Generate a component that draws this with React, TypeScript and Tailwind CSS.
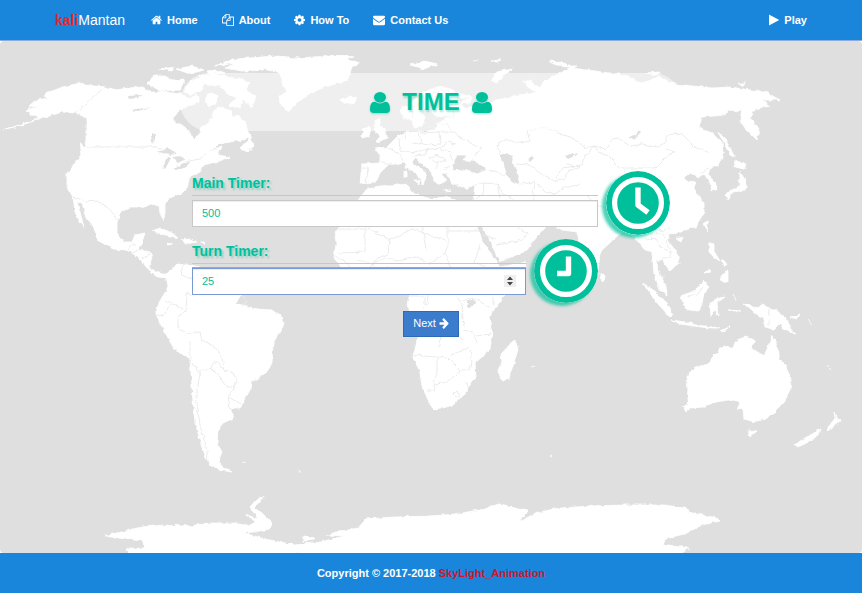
import React, { useState } from "react";

const icons = {
  home: {
    box: "64 0 1664 1792",
    d: "M1472 992v480q0 26-19 45t-45 19h-384v-384h-256v384h-384q-26 0-45-19t-19-45v-480q0-1 .5-3t.5-3l575-474 575 474q1 2 1 6zm223-69l-62 74q-8 9-21 11h-3q-13 0-21-7l-692-577-692 577q-12 8-24 7-13-2-21-11l-62-74q-8-10-7-23.5t11-21.5l719-599q32-26 76-26t76 26l244 204v-195q0-14 9-23t23-9h192q14 0 23 9t9 23v408l219 182q10 8 11 21.5t-7 23.5z",
  },
  files: {
    box: "0 0 1792 1792",
    d: "M1696 384q40 0 68 28t28 68v1216q0 40-28 68t-68 28h-960q-40 0-68-28t-28-68v-288h-544q-40 0-68-28t-28-68v-672q0-40 20-88t48-76l408-408q28-28 76-48t88-20h416q40 0 68 28t28 68v328q68-40 128-40h416zm-544 213l-299 299h299v-299zm-640-384l-299 299h299v-299zm196 647l316-316v-416h-384v416q0 40-28 68t-68 28h-416v640h512v-256q0-40 20-88t48-76zm956 804v-1152h-384v416q0 40-28 68t-68 28h-416v640h896z",
  },
  cog: {
    box: "128 0 1536 1792",
    d: "M1152 896q0-106-75-181t-181-75-181 75-75 181 75 181 181 75 181-75 75-181zm512-109v222q0 12-8 23t-20 13l-185 28q-19 54-39 91 35 50 107 138 10 12 10 25t-9 23q-27 37-99 108t-94 71q-12 0-26-9l-138-108q-44 23-91 38-16 136-29 186-7 28-36 28h-222q-14 0-24.5-8.5t-11.5-21.5l-28-184q-49-16-90-37l-141 107q-10 9-25 9-14 0-25-11-126-114-165-168-7-10-7-23 0-12 8-23 15-21 51-66.5t54-70.5q-27-50-41-99l-183-27q-13-2-21-12.5t-8-23.5v-222q0-12 8-23t19-13l186-28q14-46 39-92-40-57-107-138-10-12-10-24 0-10 9-23 26-36 98.5-107.5t94.5-71.5q13 0 26 10l138 107q44-23 91-38 16-136 29-186 7-28 36-28h222q14 0 24.5 8.5t11.5 21.5l28 184q49 16 90 37l142-107q9-9 24-9 13 0 25 10 129 119 165 170 7 8 7 22 0 12-8 23-15 21-51 66.5t-54 70.5q26 50 41 98l183 28q13 2 21 12.5t8 23.5z",
  },
  envelope: {
    box: "0 0 1792 1792",
    d: "M1792 710v794q0 66-47 113t-113 47h-1472q-66 0-113-47t-47-113v-794q44 49 101 87 362 246 497 345 57 42 92.5 65.5t94.5 48 110 24.5h2q51 0 110-24.5t94.5-48 92.5-65.5q170-123 498-345 57-39 100-87zm0-294q0 79-49 151t-122 123q-376 261-468 325-10 7-42.5 31t-54 38.5-52 32.5-57.5 27-50 9h-2q-23 0-50-9t-57.5-27-52-32.5-54-38.5-42.5-31q-91-64-262-182.5t-205-142.5q-62-42-117-115.5t-55-136.5q0-78 41.5-130t118.5-52h1472q65 0 112.5 47t47.5 113z",
  },
  play: {
    box: "192 0 1408 1792",
    d: "M1576 927l-1328 738q-23 13-39.5 3t-16.5-36v-1472q0-26 16.5-36t39.5 3l1328 738q23 13 23 31t-23 31z",
  },
  user: {
    box: "256 128 1280 1536",
    d: "M1536 1399q0 109-62.5 187t-150.5 78h-854q-88 0-150.5-78t-62.5-187q0-85 8.5-160.5t31.5-152 58.5-131 94-89 134.5-34.5q131 128 313 128t313-128q76 0 134.5 34.5t94 89 58.5 131 31.5 152 8.5 160.5zm-256-887q0 159-112.5 271.5t-271.5 112.5-271.5-112.5-112.5-271.5 112.5-271.5 271.5-112.5 271.5 112.5 112.5 271.5z",
  },
  arrow: {
    box: "64 128 1600 1664",
    d: "M1600 960q0 54-37 91l-651 651q-39 37-91 37-51 0-90-37l-75-75q-38-38-38-91t38-91l293-293h-704q-52 0-84.5-37.5t-32.5-90.5v-128q0-53 32.5-90.5t84.5-37.5h704l-293-294q-38-36-38-90t38-90l75-75q38-38 90-38 53 0 91 38l651 651q37 35 37 90z",
  },
};

function Icon({ name, className }: { name: keyof typeof icons; className: string }) {
  return (
    <svg viewBox={icons[name].box} preserveAspectRatio="none" className={`shrink-0 fill-current ${className}`} aria-hidden="true">
      <path d={icons[name].d} />
    </svg>
  );
}

const land = [
  // North and Central America
  "M3 130L22 124 40 118 34 116 26 111 32 108 40 108 30 106 37 100 48 98 43 96 52 91 66 86 80 83 94 86 105 87 117 90 127 88 143 87 150 92 165 92 180 94 190 98 197 95 200 102 187 107 180 110 174 117 175 122 187 128 192 137 195 140 200 135 200 129 208 124 212 118 212 112 218 108 230 110 232 117 238 115 245 122 248 132 252 137 242 140 230 142 220 144 208 152 222 147 218 155 230 157 217 162 203 165 200 172 190 177 187 187 183 192 170 198 165 203 165 213 163 221 160 213 159 206 152 204 142 207 130 207 120 212 117 223 117 233 123 242 132 242 135 235 145 233 142 242 138 250 150 252 152 257 149 267 155 272 160 272 167 275 166 278 158 277 147 268 140 259 132 253 125 250 113 249 97 240 95 230 87 218 82 203 77 202 80 212 84 227 80 222 75 212 73 197 67 187 67 173 75 163 82 155 80 142 85 149 87 140 87 118 75 113 62 112 40 119 22 125Z",
  // Arctic islands
  "M147 83L155 76 165 76 172 80 185 79 180 90 160 91 150 85Z",
  "M184 92L190 82 200 78 204 84 200 92 190 94Z",
  "M199 76L212 74 228 77 240 79 250 83 246 89 256 97 252 107 243 99 239 109 230 105 237 98 226 93 220 85 205 84Z",
  "M205 97L212 92 218 96 216 104 208 106Z M176 69L192 66 204 70 190 74Z M214 66L235 59 250 58 275 56 290 57 272 61 263 70 242 71 225 68 238 63Z M160 69L175 67 172 71Z M232 64L260 60 250 67Z M206 71L216 70 226 73 210 74Z",
  // Newfoundland
  "M240 148L250 138 254 146 247 152Z",
  // Greenland and Iceland
  "M262 62L275 57 300 58 340 55 353 57 345 60 360 62 352 68 350 73 347 80 335 84 323 88 310 93 297 103 290 112 286 110 280 104 279 96 287 92 282 82 278 72 268 70Z",
  "M340 100L348 96 357 98 355 102 346 104Z",
  // Caribbean
  "M152 231L160 228 172 233 178 238 166 235Z M181 240L190 239 197 242 186 244Z M200 242L205 242 204 245Z M168 243L173 244 168 245Z",
  // South America
  "M166 275L177 263 185 264 205 268 222 275 232 285 242 295 235 303 243 305 257 309 272 310 283 318 283 327 273 343 272 363 267 372 251 382 250 390 240 408 230 408 234 418 223 423 218 430 217 443 222 452 218 462 224 468 232 472 220 470 211 466 203 453 200 440 195 423 193 400 190 360 173 347 164 331 157 317 157 307 160 301 166 291 168 286Z",
  // Europe and Asia
  "M400 110L412 102 423 93 437 87 448 88 457 93 472 97 470 103 460 104 465 108 478 106 488 103 497 100 513 96 525 94 537 93 528 87 522 80 530 81 540 88 543 82 560 73 572 68 602 72 625 75 642 83 659 77 675 84 712 88 729 87 765 92 780 100 762 100 770 106 752 111 750 118 759 128 757 140 745 128 740 120 742 109 737 112 729 109 725 115 702 117 699 128 712 133 722 143 723 153 719 165 710 168 708 175 716 183 717 190 712 191 709 180 704 174 699 177 690 173 684 177 687 181 697 182 694 190 704 203 704 213 695 227 677 233 669 234 667 240 677 252 679 263 670 271 662 260 656 260 659 271 666 286 667 295 660 290 654 274 652 252 644 249 635 238 622 232 615 238 600 252 598 273 592 274 584 260 577 232 562 230 550 224 542 230 527 250 500 262 497 257 490 240 483 228 477 218 473 200 475 185 462 187 452 183 447 174 450 171 463 170 477 174 487 170 480 163 472 160 463 161 467 155 457 155 452 165 453 170 442 174 446 181 438 185 432 175 427 168 415 158 412 162 427 174 422 184 421 179 407 167 405 162 388 165 380 173 377 180 367 185 360 183 362 164 380 163 380 155 375 149 387 147 397 137 403 133 412 132 422 132 435 130 438 123 448 118 450 115 438 117 432 112 437 103 430 103 422 112 425 118 422 126 415 128 411 119 403 119Z",
  // British Isles
  "M375 120L380 118 380 125 385 130 388 138 377 142 379 136 374 129Z M363 129L369 127 370 136 362 138Z",
  // Arctic islands of Eurasia
  "M492 80L497 72 512 69 502 76 496 83Z M410 65L425 61 437 64 424 69Z M550 61L565 63 568 66 556 65Z M562 66L577 66 572 69Z M645 73L660 72 658 75Z M738 83L746 83 743 86Z M473 61L479 60 M491 61L501 60 497 62Z",
  // Mediterranean islands
  "M404 171L407 170 407 177 404 177Z M405 166L407 166 406 169Z M414 180L420 180 419 184Z M443 190L452 190 447 192Z M464 188L470 186 468 190Z",
  // Africa
  "M358 200L367 189 380 187 407 184 412 193 430 199 443 197 460 201 473 201 477 227 482 240 490 253 500 267 527 262 520 278 503 297 489 317 492 333 490 350 475 363 476 377 468 385 467 392 453 405 443 408 433 409 429 402 422 387 420 372 413 357 418 338 416 325 407 305 410 294 403 288 390 287 370 292 352 284 342 268 334 258 336 244 335 233 340 226Z",
  // Madagascar
  "M515 339L518 350 509 378 503 381 499 376 498 370 502 362 501 354Z",
  // Sri Lanka, Hainan and Taiwan
  "M601 272L605 277 603 282 600 279Z M676 239L683 237 681 242Z M704 223L708 221 707 231Z",
  // Japan and Sakhalin
  "M718 132L727 141 735 158 730 155Z M735 160L746 165 744 169 734 167Z M740 172L746 181 746 190 733 192 728 200 724 195 739 186Z",
  // Philippines
  "M709 243L714 243 714 251 720 261 715 258 709 252Z M721 260L726 263 724 267Z M722 275L728 271 728 282 720 280Z M711 272L704 273 710 268Z",
  // Indonesia and Papua
  "M643 283L653 290 667 304 672 314 671 318 658 304Z M672 320L685 322 696 325 706 326 720 328 708 328 680 324Z M681 296L695 290 704 281 709 287 704 293 702 305 699 311 689 310 684 306Z M710 303L716 299 725 297 717 303 718 316 714 310 711 317Z M721 331L729 327 723 332Z M743 303L750 304 753 308 762 305 776 310 786 318 790 326 795 334 784 329 779 324 774 329 765 327 763 318 753 312Z M790 318L800 314 797 320Z M733 294L736 300 M728 310L741 311Z M807 319L812 325 M827 365L832 370Z",
  // Australia and New Zealand
  "M683 407L687 405 688 388 687 376 691 370 710 362 714 355 724 346 732 348 737 340 745 337 755 340 751 348 764 356 768 347 772 335 778 348 780 360 785 365 791 379 790 390 783 403 768 418 755 422 744 419 743 408 737 409 740 403 734 401 727 400 712 403 704 407 691 408 687 411Z",
  "M748 430L757 431 750 437Z M794 445L805 438 821 429 819 435 803 445 797 447Z M826 430L833 421 835 418 834 411 837 420 841 420 833 427Z",
  // Antarctica
  "M104 536L125 531 142 527 165 525 190 526 210 523 240 523 250 526 255 521 245 514 258 519 250 507 256 500 264 496 254 508 262 513 272 523 270 529 255 532 243 533 265 539 295 545 320 542 345 536 327 535 340 531 358 528 366 519 395 517 430 516 455 514 480 510 500 504 528 510 519 521 540 512 560 508 590 506 625 505 665 505 683 508 697 514 713 517 721 520 700 526 685 534 665 539 663 545 690 548 680 554 130 554 125 549 145 548 142 541 118 538Z",
  "M303 537L312 537 315 540 303 541Z M126 548L170 549 140 552Z",
  // Small southern islands
  "M242 462L246 463 M550 455L553 456 M298 470L301 472 M532 367L534 366",
].join(" ");

const water = [
  "M128 96L143 95 138 98 129 99Z",
  "M130 110L151 107 138 111Z",
  "M153 132L156 136 153 143 151 137Z",
  "M158 152L168 147 176 154 170 155Z",
  "M162 168L167 157 171 158 165 169Z",
  "M172 157L183 156 184 160 177 162Z",
  "M173 168L184 164 191 161 186 167 176 170Z",
  "M500 155L505 153 513 156 512 163 517 171 520 182 513 184 507 175Z",
  "M528 158L532 155 533 158 530 161Z",
  "M565 156L571 154 578 154 568 159Z",
  "M629 138L636 134 639 130 637 127 640 133 634 139Z",
  "M467 302L473 299 475 303 471 308 467 306Z",
  "M461 312L464 325 465 329 462 321Z",
  "M474 332L477 346 475 340Z",
  "M457 96L462 99 470 98 459 102Z",
].join(" ");

const borders = [
  "M105 87L76 113 M87 147L154 147 168 151 M184 162L200 159 208 152",
  "M73 197L87 202 98 201 109 208 117 219 M128 250L132 244 137 244 M133 253L138 250 M141 258L150 254 M184 264L181 272 185 276 192 280",
  "M157 315L163 316 171 305 165 301 M168 301L176 305 186 311 187 293 192 295 M187 309L178 318 178 327 187 334 200 332 202 340 215 347 223 361 224 370 216 361 211 368 199 371 196 368 190 360 190 340",
  "M193 363L200 374 196 396 200 425 207 450 208 463 M211 368L221 378 226 387 234 387 238 379 232 372 224 370 M238 382L228 397 230 408 M228 397L241 404 M243 297L247 301 242 307",
  "M337 229L365 229 365 252 339 253 M365 226L390 240 388 254 378 258 370 267 M390 240L412 229 445 240 M423 200L423 232 426 250 M448 226L448 245 445 253 430 264 M448 231L480 231 M445 253L450 267 M480 245L475 262 485 267 M335 257L345 261 351 268 M358 260L372 264 385 258 399 261 415 257 426 262 M388 287L387 266 M374 266L373 285",
  "M410 296L425 296 425 305 430 302 M428 295L427 305 422 308 M455 295L462 304 463 320 M463 300L475 298 490 308 M493 305L493 296 M414 355L447 358 M440 347L441 330 458 332 462 340 M450 355L464 350 470 347 M437 358L437 372 434 384 435 391 427 391 M435 384L448 382 460 370 470 370 472 363 470 350 M476 336L491 334 M466 382L467 386 M453 394L457 391 460 395 456 397Z M448 358L460 370 M462 330L473 332",
  "M362 168L368 168 366 184 M380 162L399 165 M388 148L400 154 403 163 M399 139L400 150 410 153 M405 134L406 139 M419 132L421 144 411 143 M421 133L439 132 440 144 428 145 421 143 M410 153L420 151 430 149 440 148 448 142 456 144 M427 150L425 155 412 156 M440 150L450 152 452 161 M430 158L438 155 447 160 436 163 430 158 M438 163L436 170 M442 170L450 166 M440 132L455 132 460 138 472 144 481 148 476 155 M438 123L447 124 451 130 M444 117L454 117 453 108 449 100 447 89",
  "M412 118L413 108 422 101 430 93 445 91 M435 102L435 95",
  "M500 155L497 145 505 139 520 143 530 141 527 131 545 127 563 135 575 139 585 148 595 146 605 150 613 139 618 138 630 146 642 144 657 147 665 143 667 135 681 133 695 147 710 153",
  "M594 146L598 152 608 156 620 168 640 168 655 168 665 158 675 152 666 149 M594 146L583 160 582 165 562 168 555 180 M517 164L530 165 540 173 555 181 565 178 M520 184L535 182 545 191 555 194 565 187 580 185 M535 182L533 196 537 209 M567 164L580 167 568 171 565 178",
  "M487 170L499 172 505 176 M475 185L484 183 497 184 500 198 M484 183L483 194 476 199 M497 184L503 194 515 200 M483 235L495 239 M496 245L508 243 523 240 528 233 518 228",
  "M586 195L598 206 610 211 M652 240L650 230 657 224 662 232 670 228 M646 240L655 238 660 247 671 252 670 258 662 258 M656 233L663 235 672 253 M659 275L664 276 M709 168L700 174 M770 309L769 326 M688 296L698 294 703 287",
].join(" ");

function WorldMap() {
  return (
    <svg viewBox="0 41 862 512" preserveAspectRatio="none" className="absolute inset-0 size-full rounded-sm bg-[#dfdfdf]" aria-hidden="true">
      <filter id="coast" x="0" y="0" width="100%" height="100%" colorInterpolationFilters="sRGB">
        <feTurbulence type="fractalNoise" baseFrequency="0.18" numOctaves="2" seed="4" result="noise" />
        <feDisplacementMap in="SourceGraphic" in2="noise" scale="4" xChannelSelector="R" yChannelSelector="G" />
      </filter>
      <g filter="url(#coast)">
        <path d={land} fill="#fff" stroke="#fff" strokeWidth="0.8" />
        <path d={water} fill="#dfdfdf" />
      </g>
      <path d={borders} fill="none" stroke="#ebebeb" strokeWidth="1" strokeLinejoin="round" filter="url(#coast)" />
    </svg>
  );
}

function Clock({ hands }: { hands: string }) {
  return (
    <svg viewBox="0 0 64 64" className="size-16 shrink-0 rounded-full shadow-[-4px_3px_3px_#00c09bb3]" aria-hidden="true">
      <circle cx="32" cy="32" r="32" fill="#00c09b" />
      <circle cx="32" cy="32" r="23.4" fill="none" stroke="#fff" strokeWidth="5.2" />
      <path d={hands} fill="none" stroke="#fff" strokeWidth="5.4" strokeLinejoin="round" />
    </svg>
  );
}

const links: { label: string; icon: keyof typeof icons; size: string }[] = [
  { label: "Home", icon: "home", size: "h-3 w-[11px]" },
  { label: "About", icon: "files", size: "size-3" },
  { label: "How To", icon: "cog", size: "h-3 w-[11px]" },
  { label: "Contact Us", icon: "envelope", size: "size-3" },
];

const labelStyle =
  "h-[25px] border-b border-[#c8c8c8] text-sm leading-6 font-bold text-[#00c09b] [text-shadow:2px_2px_2px_#00c09b66]";
const fieldStyle =
  "h-[27px] w-full appearance-none border bg-white px-[9px] pb-0.5 text-[11px] text-[#00c09b] outline-none [&::-webkit-inner-spin-button]:appearance-none";

export default function App() {
  const [main, setMain] = useState("500");
  const [turn, setTurn] = useState("25");
  return (
    <div className="flex min-h-screen flex-col bg-white font-['Liberation_Sans',Arial,sans-serif] text-[11px]">
      <header className="border-b border-[#8cabdc] bg-[#1a86db] text-white">
        <nav className="mx-auto flex h-10 items-center gap-6 px-[55px] font-bold">
          <a href="#" className="mr-0.5 text-[14px] font-normal">
            <span className="font-bold text-[#e5272f]">kali</span>Mantan
          </a>
          {links.map((l) => (
            <a key={l.label} href="#" className="flex items-center gap-[5px] whitespace-nowrap">
              <Icon name={l.icon} className={l.size} />
              {l.label}
            </a>
          ))}
          <a href="#" className="ml-auto flex items-center gap-[5px]">
            <Icon name="play" className="h-3 w-2.5" />
            Play
          </a>
        </nav>
      </header>

      <main className="relative flex-1">
        <WorldMap />
        <div className="relative mx-auto flex max-w-[502px] flex-col pt-8">
          <h1 className="flex h-[58px] items-center justify-center gap-3 rounded-[30px] bg-white/50 text-2xl font-bold text-[#00c09b] [text-shadow:1px_2px_2px_#00c09b66]">
            <Icon name="user" className="h-[21px] w-5 drop-shadow-[0_1px_1px_#00c09b66]" />
            TIME
            <Icon name="user" className="h-[21px] w-5 drop-shadow-[0_1px_1px_#00c09b66]" />
          </h1>
          <form className="mx-3 mt-10 flex flex-col gap-1" onSubmit={(e) => e.preventDefault()}>
            <div className="flex gap-2">
              <div className="flex flex-1 flex-col gap-1">
                <label htmlFor="main-timer" className={labelStyle}>Main Timer:</label>
                <input
                  id="main-timer"
                  type="number"
                  value={main}
                  onChange={(e) => setMain(e.target.value)}
                  className={`${fieldStyle} border-[#c8c8c8] shadow-[inset_0_1px_1px_#00000013]`}
                />
              </div>
              <Clock hands="M32 16.500V34L42 41.500" />
            </div>
            <div className="mr-[72px] flex gap-2">
              <div className="flex flex-1 flex-col gap-1">
                <label htmlFor="turn-timer" className={labelStyle}>Turn Timer:</label>
                <div className="relative">
                  <input
                    id="turn-timer"
                    type="number"
                    value={turn}
                    onChange={(e) => setTurn(e.target.value)}
                    className={`${fieldStyle} border-[#7a9ad6] shadow-[inset_0_1px_1px_#00000013,0_-1px_0_#8cabdc]`}
                  />
                  <svg viewBox="0 0 12 12" className="pointer-events-none absolute top-[7px] right-2.5 size-3 bg-[#efefef]" aria-hidden="true">
                    <path d="M3 5L6 1.500 9 5Z M3 7L6 10.500 9 7Z" fill="#444" />
                  </svg>
                </div>
              </div>
              <Clock hands="M34.500 17.500V34.500H23" />
            </div>
            <button type="submit" className="mt-1 flex h-[26px] w-14 items-center justify-center gap-[3px] self-center border border-[#2a6cba] bg-[#3b7ccd] pb-0.5 text-white">
              Next <Icon name="arrow" className="h-[11px] w-[10px]" />
            </button>
          </form>
        </div>
      </main>

      <footer className="flex h-10 items-center justify-center bg-[#1a86db] font-bold text-white">
        <p>
          Copyright © 2017-2018 <a href="#" className="text-[#c9182b]">SkyLight_Animation</a>
        </p>
      </footer>
    </div>
  );
}
